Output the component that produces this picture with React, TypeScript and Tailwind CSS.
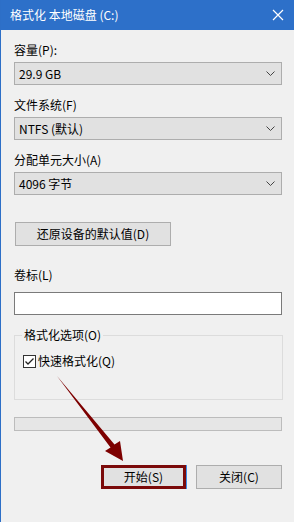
import React from 'react';

const font = { fontFamily: '"Noto Sans CJK SC", "Noto Sans", sans-serif' };

function Chevron() {
  return (
    <svg width="9" height="5" viewBox="0 0 9 5" className="shrink-0">
      <path d="M0.5 0.5 L4.5 4.5 L8.5 0.5" fill="none" stroke="#444" strokeWidth="1" />
    </svg>
  );
}

function Select({ value }: { value: string }) {
  return (
    <div className="h-[23px] w-[268px] border border-[#adadad] bg-[#e1e1e1] flex items-center justify-between pl-[4px] pr-[6px]">
      <span className="text-[12px] leading-[16px] text-black">{value}</span>
      <Chevron />
    </div>
  );
}

function Label({ text, className = '' }: { text: string; className?: string }) {
  return <div className={`text-[12px] leading-[16px] text-black ${className}`}>{text}</div>;
}

export default function App() {
  return (
    <div style={font} className="relative w-[294px] h-[522px] bg-[#f0f0f0] overflow-hidden border-l border-[#2d6fc7]">
      {/* Title bar */}
      <div className="h-[30px] bg-[#2d70c9] flex items-center justify-between pl-[9px] pr-[10px]">
        <span className="text-[12px] leading-[16px] text-white">格式化 本地磁盘 (C:)</span>
        <svg width="12" height="12" viewBox="0 0 12 12">
          <path d="M1 1 L11 11 M11 1 L1 11" stroke="#fff" strokeWidth="1.2" />
        </svg>
      </div>

      <div className="pl-[13px] flex flex-col">
        <Label text="容量(P):" className="mt-[12px]" />
        <div className="mt-[4px]">
          <Select value="29.9 GB" />
        </div>

        <Label text="文件系统(F)" className="mt-[12px]" />
        <div className="mt-[4px]">
          <Select value="NTFS (默认)" />
        </div>

        <Label text="分配单元大小(A)" className="mt-[12px]" />
        <div className="mt-[4px]">
          <Select value="4096 字节" />
        </div>

        <button className="mt-[27px] ml-[1px] h-[24px] w-[156px] border border-[#adadad] bg-[#e1e1e1] text-[12px] leading-[16px] text-black">
          还原设备的默认值(D)
        </button>

        <Label text="卷标(L)" className="mt-[21px]" />
        <div className="mt-[9px] h-[23px] w-[268px] border border-[#7a7a7a] bg-white" />

        <fieldset className="mt-[12px] w-[269px] h-[73px] border border-[#dcdcdc]">
          <legend className="ml-[7px] px-[2px] text-[12px] leading-[16px] text-black">格式化选项(O)</legend>
          <div className="flex items-center mt-[10px] ml-[8px] gap-[2px]">
            <svg width="13" height="13" viewBox="0 0 13 13">
              <rect x="0.5" y="0.5" width="12" height="12" fill="#fff" stroke="#333" />
              <path d="M2.5 6.5 L5 9 L10.5 3.5" fill="none" stroke="#222" strokeWidth="1.3" />
            </svg>
            <span className="text-[12px] leading-[16px] text-black">快速格式化(Q)</span>
          </div>
        </fieldset>

        <div className="mt-[17px] h-[14px] w-[268px] border border-[#bcbcbc] bg-[#e6e6e6]" />

        <div className="mt-[34px] flex items-center w-[268px] justify-end gap-[10px]">
          <button className="h-[24px] w-[85px] border-[3px] border-[#7b0a0a] bg-[#e1e1e1] text-[12px] leading-[16px] text-black shadow-[1px_0_0_#3b8ee8]">
            开始(S)
          </button>
          <button className="h-[24px] w-[86px] border border-[#adadad] bg-[#e1e1e1] text-[12px] leading-[16px] text-black">
            关闭(C)
          </button>
        </div>
      </div>

      {/* annotation arrow */}
      <svg className="absolute left-0 top-0 pointer-events-none" width="294" height="522" viewBox="0 0 294 522">
        <polygon
          points="56,376 113.5,444.5 119,441 122,461 104,451 109.5,447.5"
          fill="#7d0000"
        />
      </svg>
    </div>
  );
}
